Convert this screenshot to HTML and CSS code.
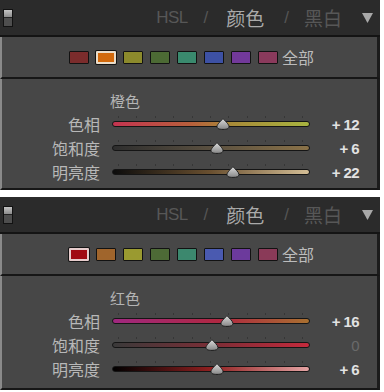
FILE: index.html
```html
<!DOCTYPE html>
<html>
<head>
<meta charset="utf-8">
<link rel="stylesheet" href="styles.css">
</head>
<body>
<div class="panel">
  <div class="header">
    <div class="toggle"><span class="t-top"></span><span class="t-bot"></span></div>
    <div class="tabs">
      <span class="tab dim hsl">HSL</span>
      <span class="sep s1">/</span>
      <span class="tab cjk active c1">颜色</span>
      <span class="sep s2">/</span>
      <span class="tab cjk dim c2">黑白</span>
      <svg class="tri" width="11" height="10" viewBox="0 0 11 10"><polygon points="0,0 11,0 5.5,10" fill="#a8a8a8"/></svg>
    </div>
  </div>
  <div class="swatches">
    <span class="sw" style="background:#7b2c2c"></span>
    <span class="sw sel" style="background:#d2690c"></span>
    <span class="sw" style="background:#8c8a2c"></span>
    <span class="sw" style="background:#4c6a34"></span>
    <span class="sw" style="background:#3a8a6e"></span>
    <span class="sw" style="background:#3d51a4"></span>
    <span class="sw" style="background:#72399a"></span>
    <span class="sw" style="background:#8a3a5c"></span>
    <span class="all">全部</span>
  </div>
  <div class="sliders">
    <div class="title">橙色</div>
    <div class="row">
      <span class="label">色相</span>
      <div class="slider"><div class="ticks"></div><div class="track hue-o"></div>
        <svg class="thumb" style="left:calc(50% + 12px - 7px)" width="14" height="12" viewBox="0 0 14 12"><defs><linearGradient id="g1" x1="0" y1="0" x2="0" y2="1"><stop offset="0" stop-color="#dcdcdc"/><stop offset="1" stop-color="#868686"/></linearGradient></defs><path d="M7 0.6 C8.5 2.6 13 6.2 13 8.4 C13 10.6 11 11.4 7 11.4 C3 11.4 1 10.6 1 8.4 C1 6.2 5.5 2.6 7 0.6 Z" fill="url(#g1)" stroke="#1c1c1c" stroke-width="1"/></svg>
      </div>
      <span class="val">+ 12</span>
    </div>
    <div class="row">
      <span class="label">饱和度</span>
      <div class="slider"><div class="ticks"></div><div class="track sat-o"></div>
        <svg class="thumb" style="left:calc(50% + 6px - 7px)" width="14" height="12" viewBox="0 0 14 12"><path d="M7 0.6 C8.5 2.6 13 6.2 13 8.4 C13 10.6 11 11.4 7 11.4 C3 11.4 1 10.6 1 8.4 C1 6.2 5.5 2.6 7 0.6 Z" fill="url(#g1)" stroke="#1c1c1c" stroke-width="1"/></svg>
      </div>
      <span class="val">+ 6</span>
    </div>
    <div class="row">
      <span class="label">明亮度</span>
      <div class="slider"><div class="ticks"></div><div class="track lum-o"></div>
        <svg class="thumb" style="left:calc(50% + 22px - 7px)" width="14" height="12" viewBox="0 0 14 12"><path d="M7 0.6 C8.5 2.6 13 6.2 13 8.4 C13 10.6 11 11.4 7 11.4 C3 11.4 1 10.6 1 8.4 C1 6.2 5.5 2.6 7 0.6 Z" fill="url(#g1)" stroke="#1c1c1c" stroke-width="1"/></svg>
      </div>
      <span class="val">+ 22</span>
    </div>
  </div>
</div>

<div class="panel second">
  <div class="header">
    <div class="toggle"><span class="t-top"></span><span class="t-bot"></span></div>
    <div class="tabs">
      <span class="tab dim hsl">HSL</span>
      <span class="sep s1">/</span>
      <span class="tab cjk active c1">颜色</span>
      <span class="sep s2">/</span>
      <span class="tab cjk dim c2">黑白</span>
      <svg class="tri" width="11" height="10" viewBox="0 0 11 10"><polygon points="0,0 11,0 5.5,10" fill="#a8a8a8"/></svg>
    </div>
  </div>
  <div class="swatches">
    <span class="sw sel red" style="background:#a00a12"></span>
    <span class="sw" style="background:#a0652c"></span>
    <span class="sw" style="background:#9a9a30"></span>
    <span class="sw" style="background:#4d6a36"></span>
    <span class="sw" style="background:#3c886e"></span>
    <span class="sw" style="background:#4a5ab0"></span>
    <span class="sw" style="background:#6c3a9c"></span>
    <span class="sw" style="background:#8a3a58"></span>
    <span class="all">全部</span>
  </div>
  <div class="sliders">
    <div class="title">红色</div>
    <div class="row">
      <span class="label">色相</span>
      <div class="slider"><div class="ticks"></div><div class="track hue-r"></div>
        <svg class="thumb" style="left:calc(50% + 16px - 7px)" width="14" height="12" viewBox="0 0 14 12"><path d="M7 0.6 C8.5 2.6 13 6.2 13 8.4 C13 10.6 11 11.4 7 11.4 C3 11.4 1 10.6 1 8.4 C1 6.2 5.5 2.6 7 0.6 Z" fill="url(#g1)" stroke="#1c1c1c" stroke-width="1"/></svg>
      </div>
      <span class="val">+ 16</span>
    </div>
    <div class="row">
      <span class="label">饱和度</span>
      <div class="slider"><div class="ticks"></div><div class="track sat-r"></div>
        <svg class="thumb" style="left:calc(50% + 1px - 7px)" width="14" height="12" viewBox="0 0 14 12"><path d="M7 0.6 C8.5 2.6 13 6.2 13 8.4 C13 10.6 11 11.4 7 11.4 C3 11.4 1 10.6 1 8.4 C1 6.2 5.5 2.6 7 0.6 Z" fill="url(#g1)" stroke="#1c1c1c" stroke-width="1"/></svg>
      </div>
      <span class="val zero">0</span>
    </div>
    <div class="row">
      <span class="label">明亮度</span>
      <div class="slider"><div class="ticks"></div><div class="track lum-r"></div>
        <svg class="thumb" style="left:calc(50% + 6px - 7px)" width="14" height="12" viewBox="0 0 14 12"><path d="M7 0.6 C8.5 2.6 13 6.2 13 8.4 C13 10.6 11 11.4 7 11.4 C3 11.4 1 10.6 1 8.4 C1 6.2 5.5 2.6 7 0.6 Z" fill="url(#g1)" stroke="#1c1c1c" stroke-width="1"/></svg>
      </div>
      <span class="val">+ 6</span>
    </div>
  </div>
</div>
</body>
</html>
```

FILE: styles.css
```css
html, body {
  margin: 0;
  padding: 0;
  background: #ffffff;
}
body {
  width: 384px;
  height: 392px;
  overflow: hidden;
  font-family: "Liberation Sans", "Noto Sans CJK SC", sans-serif;
}
.panel {
  width: 380px;
  background: #2b2b2b;
}
.panel.second {
  margin-top: 7px;
}
.header {
  height: 35px;
  display: flex;
  align-items: center;
  border-bottom: 2px solid #141414;
  box-sizing: content-box;
}
.toggle {
  margin-left: 3px;
  width: 8px;
  height: 16px;
  border: 1px solid #121212;
  display: flex;
  flex-direction: column;
}
.t-top {
  flex: 1;
  background: linear-gradient(#c4c4c4, #8c8c8c);
}
.t-bot {
  flex: 1;
  background: #4e4e4e;
  border-top: 1px solid #222;
}
.tabs {
  margin-left: auto;
  margin-right: 7px;
  display: flex;
  align-items: center;
}
.tab {
  line-height: 20px;
}
.hsl {
  font-size: 17px;
  letter-spacing: -0.6px;
}
.cjk {
  font-family: "Noto Sans CJK SC", sans-serif;
  font-size: 19px;
}
.dim {
  color: #575757;
}
.active {
  color: #aaaaaa;
}
.sep {
  color: #555555;
  font-size: 17px;
}
.s1 {
  margin: 0 18px 0 16px;
}
.s2 {
  margin: 0 15px 0 20px;
}
.tri {
  margin-left: 20px;
  display: block;
}
.swatches {
  height: 40px;
  background: #474747;
  border-left: 2px solid #8a8a8a;
  border-right: 3px solid #1c1c1c;
  border-bottom: 2px solid #161616;
  display: flex;
  align-items: center;
  padding-left: 67px;
  gap: 7px;
}
.sw {
  width: 20px;
  height: 13px;
  box-sizing: border-box;
  border: 1px solid #121212;
  border-radius: 1px;
}
.sw.sel {
  border: 2px solid #eadcc8;
  box-shadow: 0 0 0 1px #141414;
}
.sw.sel.red {
  border-color: #e6cccc;
}
.all {
  margin-left: -3px;
  color: #bcbcbc;
  font-family: "Noto Sans CJK SC", sans-serif;
  font-size: 16px;
  line-height: 20px;
}
.sliders {
  background: #474747;
  border-left: 2px solid #8a8a8a;
  border-right: 3px solid #1c1c1c;
  border-bottom: 2px solid #161616;
  padding: 11px 18px 4px 0;
}
.second .sliders {
  padding-bottom: 7px;
}
.title {
  margin-left: 108px;
  color: #b4b4b4;
  font-family: "Noto Sans CJK SC", sans-serif;
  font-size: 15px;
  line-height: 22px;
}
.row {
  display: grid;
  grid-template-columns: 98px 198px 1fr;
  column-gap: 12px;
  height: 24px;
  align-items: center;
}
.label {
  text-align: right;
  color: #b8b8b8;
  font-family: "Noto Sans CJK SC", sans-serif;
  font-size: 16px;
  line-height: 24px;
}
.slider {
  position: relative;
  height: 24px;
  display: flex;
  flex-direction: column;
  justify-content: flex-start;
}
.ticks {
  margin: 4px 0 0 6px;
  width: 186px;
  height: 2px;
  background: repeating-linear-gradient(to right, #363636 0 1px, transparent 1px 18.4px);
}
.track {
  margin-top: 3px;
  height: 4px;
  border: 1px solid #151515;
  border-radius: 3px;
}
.hue-o { background: linear-gradient(to right, #c43450, #b8603c 40%, #a88a38 60%, #a8b440); }
.sat-o { background: linear-gradient(to right, #2e2e2e, #5a5040 50%, #8a7248); }
.lum-o { background: linear-gradient(to right, #0c0c0c, #6a5030 50%, #d4be96); }
.hue-r { background: linear-gradient(to right, #a02880, #b02840 55%, #a87030); }
.sat-r { background: linear-gradient(to right, #3a3a3a, #7a2e36 50%, #c42a3c); }
.lum-r { background: linear-gradient(to right, #000000, #902020 50%, #e4a4a4); }
.thumb {
  position: absolute;
  top: 6px;
  display: block;
}
.val {
  text-align: right;
  color: #e2e2e2;
  font-weight: bold;
  font-size: 15px;
  letter-spacing: -0.6px;
}
.val.zero {
  color: #6a6a6a;
  font-weight: normal;
}
```
